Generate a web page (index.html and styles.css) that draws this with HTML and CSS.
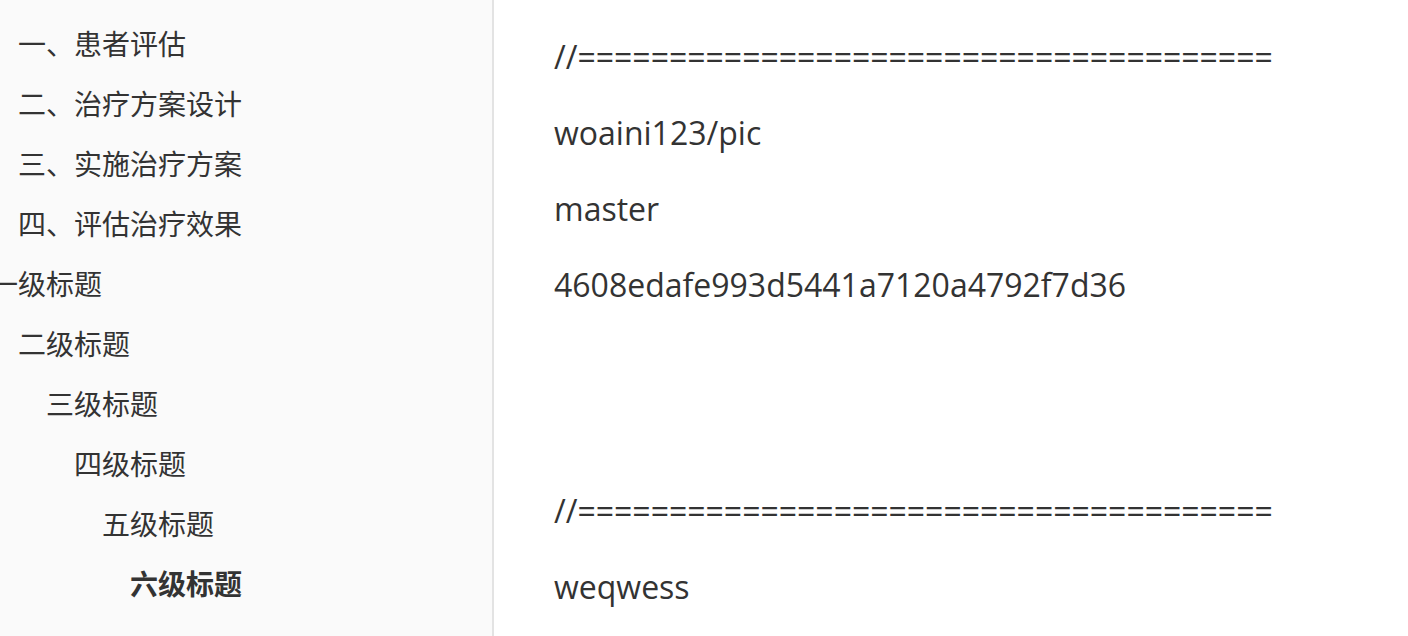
FILE: index.html
```html
<!DOCTYPE html>
<html lang="zh-CN">
<head>
<meta charset="utf-8">
<title>Outline</title>
<link rel="stylesheet" href="styles.css">
</head>
<body>
<div class="app">
  <aside class="sidebar">
    <ul class="outline">
      <li class="item lv2">一、患者评估</li>
      <li class="item lv2">二、治疗方案设计</li>
      <li class="item lv2">三、实施治疗方案</li>
      <li class="item lv2">四、评估治疗效果</li>
      <li class="item lv1">一级标题</li>
      <li class="item lv2">二级标题</li>
      <li class="item lv3">三级标题</li>
      <li class="item lv4">四级标题</li>
      <li class="item lv5">五级标题</li>
      <li class="item lv6 active">六级标题</li>
    </ul>
  </aside>
  <main class="content">
    <p class="para">//======================================</p>
    <p class="para">woaini123/pic</p>
    <p class="para">master</p>
    <p class="para">4608edafe993d5441a7120a4792f7d36</p>
    <div class="spacer"></div>
    <p class="para">//======================================</p>
    <p class="para">weqwess</p>
  </main>
</div>
</body>
</html>
```
FILE: styles.css
```css
html, body {
  margin: 0;
  padding: 0;
  height: 100%;
  overflow: hidden;
  background: #ffffff;
}

.app {
  display: flex;
  height: 636px;
  color: #333333;
}

.sidebar {
  width: 492px;
  flex: 0 0 492px;
  background: #fafafa;
  border-right: 2px solid #e3e3e3;
  overflow: hidden;
}

.outline {
  list-style: none;
  margin: 0;
  padding: 13px 0 0 0;
  font-family: "Noto Sans CJK SC", "Open Sans", sans-serif;
  font-size: 28px;
}

.item {
  line-height: 60px;
  height: 60px;
  white-space: nowrap;
}

.lv1 { margin-left: -10px; }
.lv2 { padding-left: 18px; }
.lv3 { padding-left: 46px; }
.lv4 { padding-left: 74px; }
.lv5 { padding-left: 102px; }
.lv6 { padding-left: 130px; }

.active {
  font-weight: bold;
}

.content {
  flex: 1;
  padding: 32px 0 0 60px;
  font-family: "Open Sans", "Noto Sans CJK SC", sans-serif;
  font-size: 32px;
}

.para {
  margin: 0 0 26px 0;
  line-height: 50px;
  white-space: nowrap;
}

.spacer {
  height: 150px;
}
```
